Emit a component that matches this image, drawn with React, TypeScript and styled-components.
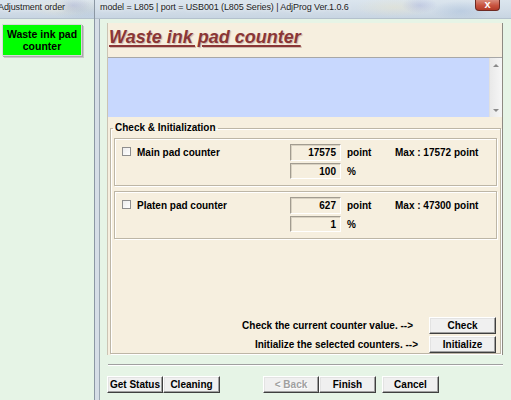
import React from "react";
import styled, { createGlobalStyle } from "styled-components";

const GlobalStyle = createGlobalStyle`
  html, body {
    margin: 0;
    padding: 0;
    width: 511px;
    height: 400px;
    overflow: hidden;
    background: #e6f4e6;
  }
  #root {
    width: 511px;
    height: 400px;
  }
`;

const Screen = styled.div`
  display: flex;
  width: 511px;
  height: 400px;
  overflow: hidden;
  font-family: "Liberation Sans", Arial, sans-serif;
  color: #000;
`;

const Window = styled.div<{ $width?: number }>`
  display: flex;
  flex-direction: column;
  flex: ${(p) => (p.$width ? "none" : "1")};
  width: ${(p) => (p.$width ? `${p.$width}px` : "auto")};
  min-width: 0;
  border-right: ${(p) => (p.$width ? "1px solid #8b97a3" : "none")};
`;

const TitleBar = styled.div`
  flex: none;
  height: 18px;
  display: flex;
  align-items: flex-start;
  overflow: hidden;
  white-space: nowrap;
  border-bottom: 1px solid #b4c1cd;
  background:
    radial-gradient(ellipse 18px 8px at 78% 30%, rgba(150, 160, 220, 0.35), transparent),
    radial-gradient(ellipse 40px 10px at 72% 40%, rgba(240, 230, 190, 0.35), transparent),
    radial-gradient(ellipse 30px 10px at 88% 60%, rgba(140, 170, 210, 0.3), transparent),
    linear-gradient(180deg, #dbe5ee 0%, #d2dde8 55%, #c8d5e2 100%);
`;

const TitleText = styled.span<{ $indent: number }>`
  margin-left: ${(p) => p.$indent}px;
  padding-top: 2px;
  font-family: "Liberation Sans", Arial, sans-serif;
  font-size: 9px;
  letter-spacing: -0.1px;
  line-height: 11px;
  color: #1c1c1c;
  text-shadow: 0 0 4px rgba(255, 255, 255, 0.9);
`;

const CloseButton = styled.div`
  margin-left: auto;
  margin-right: 11px;
  width: 23px;
  height: 10px;
  display: flex;
  justify-content: center;
  align-items: flex-end;
  overflow: hidden;
  border: 1px solid #6e2a22;
  border-top: none;
  border-radius: 0 0 4px 4px;
  background: linear-gradient(180deg, #d98a7a 0%, #c8533f 55%, #b23a28 100%);
  color: #fff;
  font-size: 11px;
  font-weight: bold;
  line-height: 11px;
`;

const Body = styled.div`
  flex: 1;
  display: flex;
  min-height: 0;
`;

const FrameStrip = styled.div`
  flex: none;
  width: 4px;
  background: #d6dee6;
  border-right: 1px solid #9ba7b2;
`;

const LeftContent = styled.div`
  flex: 1;
  padding: 5px 0 0 2px;
  background: #e6f4e6;
`;

const OrderButton = styled.div`
  width: 80px;
  height: 32px;
  box-sizing: border-box;
  display: flex;
  align-items: center;
  justify-content: center;
  text-align: center;
  background: #00ff00;
  border: 1px solid #d8d8d8;
  box-shadow: 1px 1px 0 #a8a8a8, 2px 2px 0 #c8c8c8;
  font-size: 10.5px;
  font-weight: bold;
  line-height: 12px;
`;

const MainContent = styled.div`
  flex: 1;
  display: flex;
  flex-direction: column;
  padding: 4px 8px 0 7px;
  background: #e6f4e6;
  min-width: 0;
`;

const Panel = styled.div`
  height: 332px;
  box-sizing: border-box;
  display: flex;
  flex-direction: column;
  background: #f6efdf;
  border-left: 1px solid #cbc4b4;
  border-right: 1px solid #8e8a82;
`;

const PageTitle = styled.div`
  height: 34px;
  box-sizing: border-box;
  padding: 4px 0 0 1px;
  font-size: 18px;
  line-height: 20px;
  font-weight: bold;
  font-style: italic;
  color: #8a3636;
  text-decoration: underline;
  text-decoration-thickness: 2px;
  text-underline-offset: 2px;
  text-shadow: 1px 1px 1px rgba(90, 30, 30, 0.25);
`;

const MessageBox = styled.div`
  height: 59px;
  display: flex;
  border-top: 1px solid #a7a7a7;
`;

const MessageArea = styled.div`
  flex: 1;
  background: #c8d8fe;
`;

const ScrollBar = styled.div`
  width: 13px;
  display: flex;
  flex-direction: column;
  justify-content: space-between;
  align-items: center;
  padding: 6px 0 5px;
  box-sizing: border-box;
  background: linear-gradient(90deg, #e9e9e9, #f6f6f6);
  border-left: 1px solid #e0e0e0;
`;

const Arrow = styled.div<{ $down?: boolean }>`
  width: 0;
  height: 0;
  border-left: 3px solid transparent;
  border-right: 3px solid transparent;
  border-bottom: ${(p) => (p.$down ? "none" : "3px solid #8a8a8a")};
  border-top: ${(p) => (p.$down ? "3px solid #8a8a8a" : "none")};
`;

const GroupBox = styled.fieldset`
  flex: 1;
  margin: 5px 1px 1px 2px;
  padding: 4px 3px 0 3px;
  border: 1px solid #bdb6a6;
  box-shadow: inset 1px 1px 0 #fff, 1px 1px 0 #fff;
  display: flex;
  flex-direction: column;
  gap: 5px;
  min-width: 0;
  min-height: 0;
`;

const GroupLegend = styled.legend`
  padding: 0 2px;
  margin-left: -1px;
  font-size: 10px;
  line-height: 12px;
  font-weight: bold;
`;

const CounterBox = styled.div`
  display: grid;
  grid-template-columns: 15px 153px 51px 54px auto;
  grid-template-rows: 17px 16px;
  row-gap: 2px;
  align-items: center;
  padding: 5px 0 6px 7px;
  border: 1px solid #bdb6a6;
  box-shadow: inset 1px 1px 0 #fff, 1px 1px 0 #fff;
  font-size: 10px;
  font-weight: bold;
`;

const CheckBox = styled.div`
  width: 9px;
  height: 9px;
  box-sizing: border-box;
  margin-top: -2px;
  background: linear-gradient(135deg, #ececec, #ffffff);
  border: 1px solid #8e8e8e;
`;

const CounterLabel = styled.span`
  white-space: nowrap;
`;

const ValueField = styled.div`
  height: 100%;
  box-sizing: border-box;
  display: flex;
  align-items: center;
  justify-content: flex-end;
  padding-right: 4px;
  border: 1px solid;
  border-color: #a29c90 #ffffff #ffffff #a29c90;
  box-shadow: inset 1px 1px 0 #d9d2c2;
`;

const Unit = styled.span`
  padding-left: 6px;
`;

const MaxText = styled.span`
  white-space: nowrap;
`;

const Actions = styled.div`
  margin-top: 73px;
  padding-right: 1px;
  display: flex;
  flex-direction: column;
  align-items: flex-end;
  gap: 2px;
`;

const ActionRow = styled.div<{ $gap: number }>`
  display: flex;
  align-items: center;
  gap: ${(p) => p.$gap}px;
  font-size: 10px;
  font-weight: bold;
`;

const Button = styled.button<{ $w: number }>`
  width: ${(p) => p.$w}px;
  height: 17px;
  padding: 0;
  box-sizing: border-box;
  font-family: "Liberation Sans", Arial, sans-serif;
  font-size: 10px;
  font-weight: bold;
  line-height: 14px;
  color: ${(p) => (p.disabled ? "#a0a0a0" : "#000")};
  background: #f0f0f0;
  border: 1px solid;
  border-color: #ffffff #3f3f3f #3f3f3f #ffffff;
  box-shadow: inset -1px -1px 0 #a0a0a0, inset 1px 1px 0 #e3e3e3;
  text-shadow: ${(p) => (p.disabled ? "1px 1px 0 #fff" : "none")};
`;

const Separator = styled.div`
  margin: 9px 0 0 1px;
  height: 1px;
  border-top: 1px solid #a0a0a0;
  background: #fff;
`;

const Footer = styled.div`
  display: flex;
  align-items: center;
  margin-top: 10px;
`;

const Spacer = styled.div<{ $w: number }>`
  width: ${(p) => p.$w}px;
  flex: none;
`;

type Counter = {
  name: string;
  value: string;
  percent: string;
  max: string;
};

const counters: Counter[] = [
  { name: "Main pad counter", value: "17575", percent: "100", max: "17572" },
  { name: "Platen pad counter", value: "627", percent: "1", max: "47300" },
];

export default function App() {
  return (
    <Screen>
      <GlobalStyle />
      <Window $width={94}>
        <TitleBar>
          <TitleText $indent={-2}>Adjustment order</TitleText>
        </TitleBar>
        <LeftContent>
          <OrderButton>
            Waste ink pad
            <br />
            counter
          </OrderButton>
        </LeftContent>
      </Window>

      <Window>
        <TitleBar>
          <TitleText $indent={5}>
            model = L805 | port = USB001 (L805 Series) | AdjProg Ver.1.0.6
          </TitleText>
          <CloseButton>x</CloseButton>
        </TitleBar>
        <Body>
          <FrameStrip />
          <MainContent>
            <Panel>
              <PageTitle>Waste ink pad counter</PageTitle>
              <MessageBox>
                <MessageArea />
                <ScrollBar>
                  <Arrow />
                  <Arrow $down />
                </ScrollBar>
              </MessageBox>

              <GroupBox>
                <GroupLegend>Check &amp; Initialization</GroupLegend>
                {counters.map((c) => (
                  <CounterBox key={c.name}>
                    <CheckBox />
                    <CounterLabel>{c.name}</CounterLabel>
                    <ValueField>{c.value}</ValueField>
                    <Unit>point</Unit>
                    <MaxText>Max : {c.max} point</MaxText>
                    <span />
                    <span />
                    <ValueField>{c.percent}</ValueField>
                    <Unit>%</Unit>
                  </CounterBox>
                ))}

                <Actions>
                  <ActionRow $gap={16}>
                    Check the current counter value. --&gt;
                    <Button $w={67}>Check</Button>
                  </ActionRow>
                  <ActionRow $gap={11}>
                    Initialize the selected counters. --&gt;
                    <Button $w={67}>Initialize</Button>
                  </ActionRow>
                </Actions>
              </GroupBox>
            </Panel>

            <Separator />

            <Footer>
              <Button $w={56}>Get Status</Button>
              <Button $w={57}>Cleaning</Button>
              <Spacer $w={43} />
              <Button $w={56} disabled>
                &lt; Back
              </Button>
              <Button $w={57}>Finish</Button>
              <Spacer $w={6} />
              <Button $w={57}>Cancel</Button>
            </Footer>
          </MainContent>
        </Body>
      </Window>
    </Screen>
  );
}
